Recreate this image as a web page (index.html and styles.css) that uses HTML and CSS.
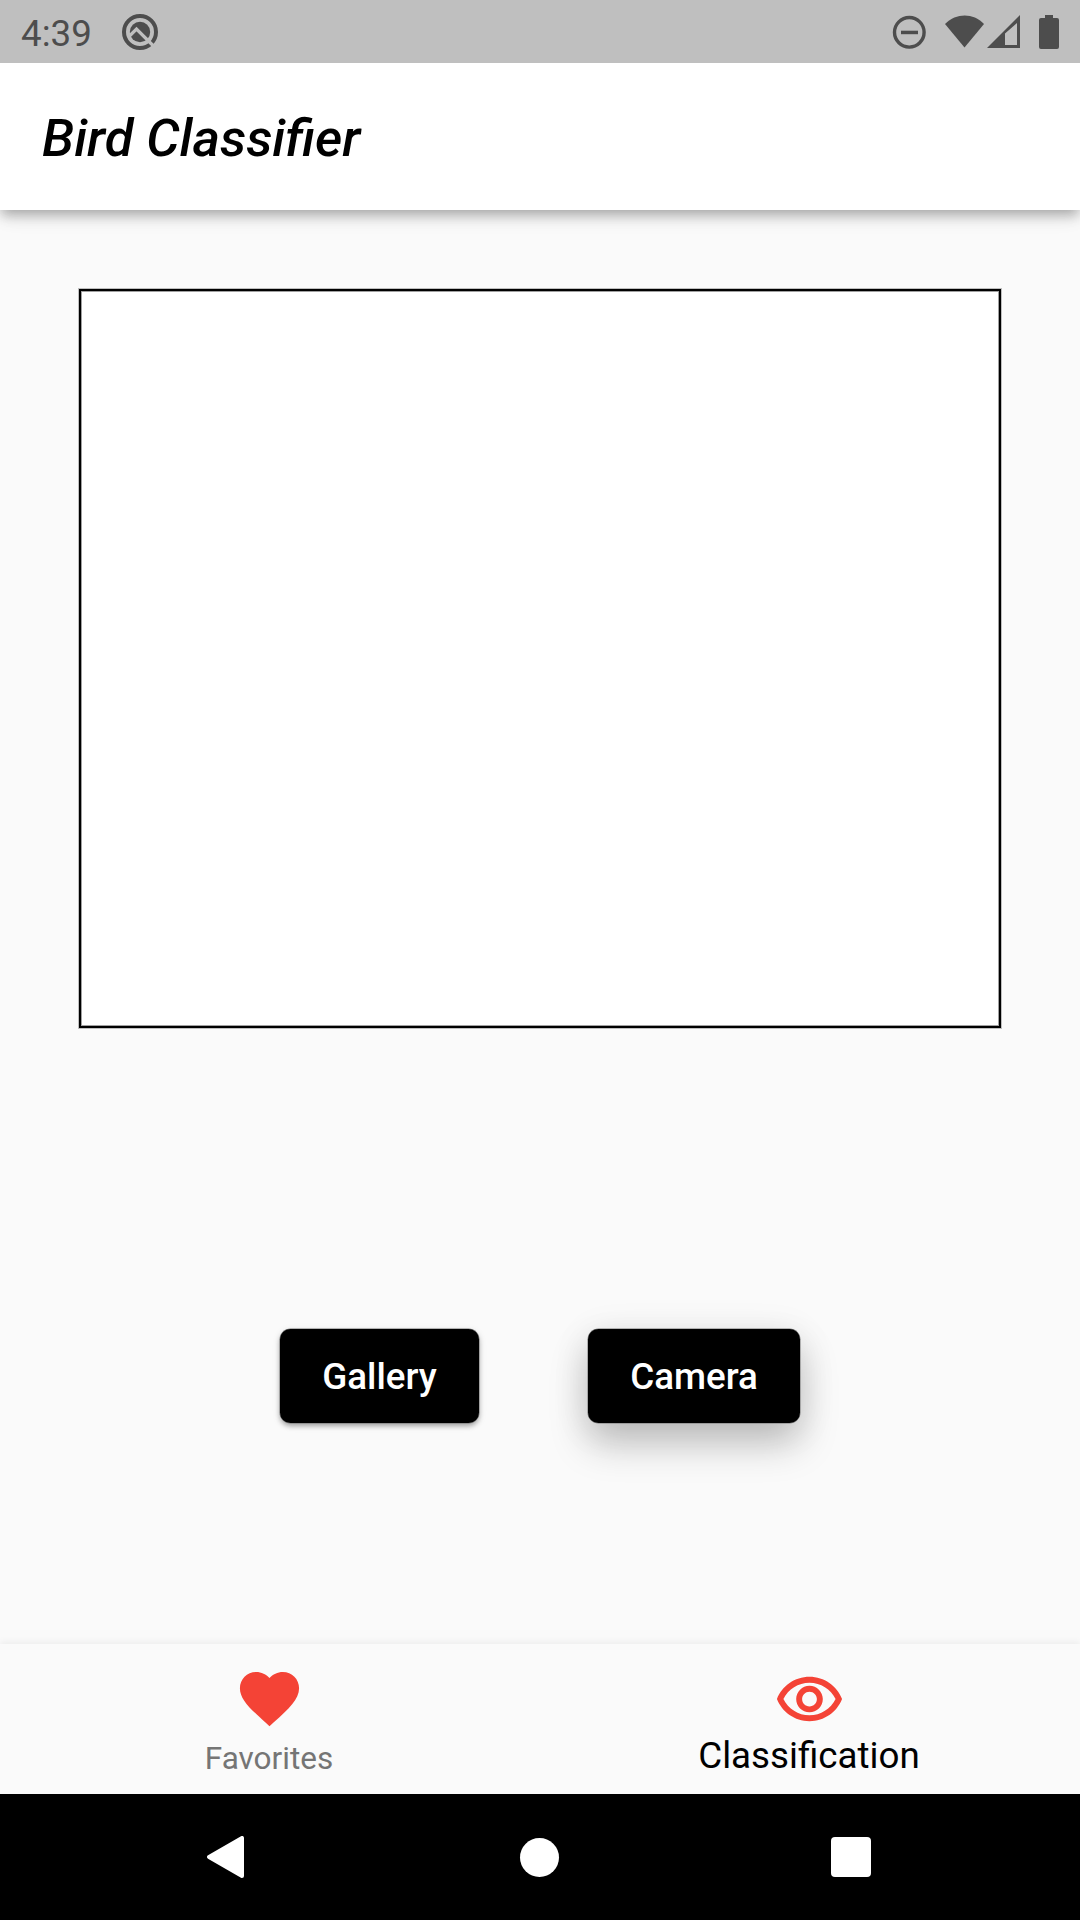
FILE: index.html
```html
<!DOCTYPE html>
<html lang="en">
<head>
<meta charset="utf-8">
<title>Bird Classifier</title>
<link rel="stylesheet" href="styles.css">
</head>
<body>
<div class="screen">
  <div class="status">
    <span class="time">4:39</span>
    <svg class="app-icon" width="38" height="38" viewBox="0 0 38 38">
      <circle cx="19" cy="19" r="16" fill="none" stroke="#4d4d4d" stroke-width="4"/>
      <circle cx="19" cy="19" r="10.200" fill="#4d4d4d"/>
      <path d="M8 23.500L15.500 16L33 33.500" fill="none" stroke="#bfbfbf" stroke-width="3.200"/>
    </svg>
    <svg class="status-icons" width="170" height="38" viewBox="0 0 170 38">
      <circle cx="19.300" cy="19.300" r="14.800" fill="none" stroke="#4d4d4d" stroke-width="3.400"/>
      <path d="M11 17.700H28V21.200H11Z" fill="#4d4d4d"/>
      <path d="M55 10.900C66.500-.3 83-.3 94 10.900L74.500 34.500Z" fill="#4d4d4d"/>
      <path d="M97 35L130 2V35ZM115 20.500V32H127V10Z" fill="#4d4d4d" fill-rule="evenodd"/>
      <path d="M155 2H163V5H167Q169 5 169 7V34Q169 36 167 36H151Q149 36 149 34V7Q149 5 151 5H155Z" fill="#4d4d4d"/>
    </svg>
  </div>
  <header class="app-bar"><h1>Bird Classifier</h1></header>
  <main class="content">
    <div class="preview"></div>
    <div class="actions">
      <button class="btn gallery">Gallery</button>
      <button class="btn camera">Camera</button>
    </div>
  </main>
  <nav class="tabs">
    <div class="tab">
      <svg class="heart" width="71" height="71" viewBox="0 0 24 24"><path d="M12 21.350l-1.450-1.320C5.400 15.360 2 12.280 2 8.500 2 5.420 4.420 3 7.500 3c1.740 0 3.410.81 4.500 2.090C13.090 3.810 14.760 3 16.500 3 19.580 3 22 5.420 22 8.500c0 3.780-3.400 6.860-8.550 11.540L12 21.350z"/></svg>
      <span>Favorites</span>
    </div>
    <div class="tab active">
      <svg class="eye" width="71" height="71" viewBox="0 0 24 24"><path d="M12 6c3.790 0 7.170 2.130 8.820 5.500C19.170 14.870 15.790 17 12 17s-7.170-2.130-8.820-5.500C4.830 8.130 8.210 6 12 6m0-2C7 4 2.730 7.110 1 11.500 2.730 15.890 7 19 12 19s9.270-3.110 11-7.500C21.270 7.110 17 4 12 4zm0 5c1.380 0 2.500 1.120 2.500 2.500S13.380 14 12 14s-2.500-1.120-2.500-2.500S10.620 9 12 9m0-2c-2.480 0-4.500 2.020-4.500 4.500S9.520 16 12 16s4.500-2.020 4.500-4.500S14.480 7 12 7z"/></svg>
      <span>Classification</span>
    </div>
  </nav>
  <div class="system-nav">
    <svg width="38" height="42" viewBox="0 0 38 42"><path d="M2 20.900L35 2V40Z" fill="#fff" stroke="#fff" stroke-width="4" stroke-linejoin="round"/></svg>
    <span class="home"></span>
    <span class="recents"></span>
  </div>
</div>
</body>
</html>
```
FILE: styles.css
```css
* { box-sizing: border-box; }
body { margin: 0; font-family: Roboto, "Liberation Sans", sans-serif; }
.screen {
  width: 1080px;
  height: 1920px;
  display: flex;
  flex-direction: column;
  background: #fafafa;
  overflow: hidden;
}
.status {
  height: 63px;
  flex: none;
  display: flex;
  align-items: center;
  padding: 0 20px 0 21px;
  background: #bfbfbf;
  color: #4d4d4d;
  z-index: 1;
}
.time { width: 100px; font-size: 36.75px; line-height: 43px; padding-top: 3px; }
.status-icons { margin-left: auto; }
.app-bar {
  height: 147px;
  flex: none;
  display: flex;
  align-items: center;
  padding: 2px 0 0 42px;
  background: #fff;
  box-shadow: 0 5.2px 10.5px -2.6px rgba(0,0,0,.2), 0 8px 13.1px 0 rgba(0,0,0,.13), 0 2.6px 24px 0 rgba(0,0,0,.08);
}
.app-bar h1 {
  margin: 0;
  font-size: 52.5px;
  font-weight: 500;
  font-style: italic;
  line-height: 62px;
  color: #000;
}
.content {
  flex: 1;
  display: flex;
  flex-direction: column;
  align-items: center;
  padding-top: 79px;
}
.preview {
  width: 922px;
  height: 739px;
  border: 2px solid #000;
  background: #fff;
  box-shadow: 0 0 0 1px #bebebe, inset 0 0 0 1px #a0a0a0;
}
.actions { display: flex; gap: 108px; margin-top: 301px; }
.btn {
  height: 94px;
  padding: 0;
  border: 0;
  border-radius: 10.5px;
  background: #000;
  color: #fff;
  font: 500 36.75px/43px Roboto, "Liberation Sans", sans-serif;
}
.gallery {
  width: 199px;
  box-shadow: 0 0 0 .5px #777, 0 3px 5px rgba(0,0,0,.3), 0 2px 8px rgba(0,0,0,.1);
}
.camera {
  width: 212px;
  margin-left: 1px;
  box-shadow: 0 0 0 .5px #777, 0 21px 38px rgba(0,0,0,.22), 0 6px 38px rgba(0,0,0,.09);
}
.tabs {
  height: 150px;
  flex: none;
  display: flex;
  background: #fafafa;
  box-shadow: 0 -2px 7px rgba(0,0,0,.06);
}
.tab {
  flex: 1;
  display: flex;
  flex-direction: column;
  align-items: center;
  padding: 19px 1px 0 0;
  color: #757575;
  font-size: 31.5px;
  line-height: 37px;
}
.tab svg { flex: none; fill: #f44336; }
.tab span { margin: 6px 1px 0 0; }
.active { padding-top: 21px; color: #000; font-size: 36.75px; line-height: 43px; }
.tab.active span { margin-top: -2px; }
.system-nav {
  height: 126px;
  flex: none;
  display: flex;
  align-items: center;
  justify-content: space-between;
  padding: 0 209px 0 207px;
  background: #000;
}
.home { width: 39px; height: 39px; border-radius: 50%; background: #fff; margin-left: 3px; }
.recents { width: 40px; height: 40px; border-radius: 4px; background: #fff; }
```
